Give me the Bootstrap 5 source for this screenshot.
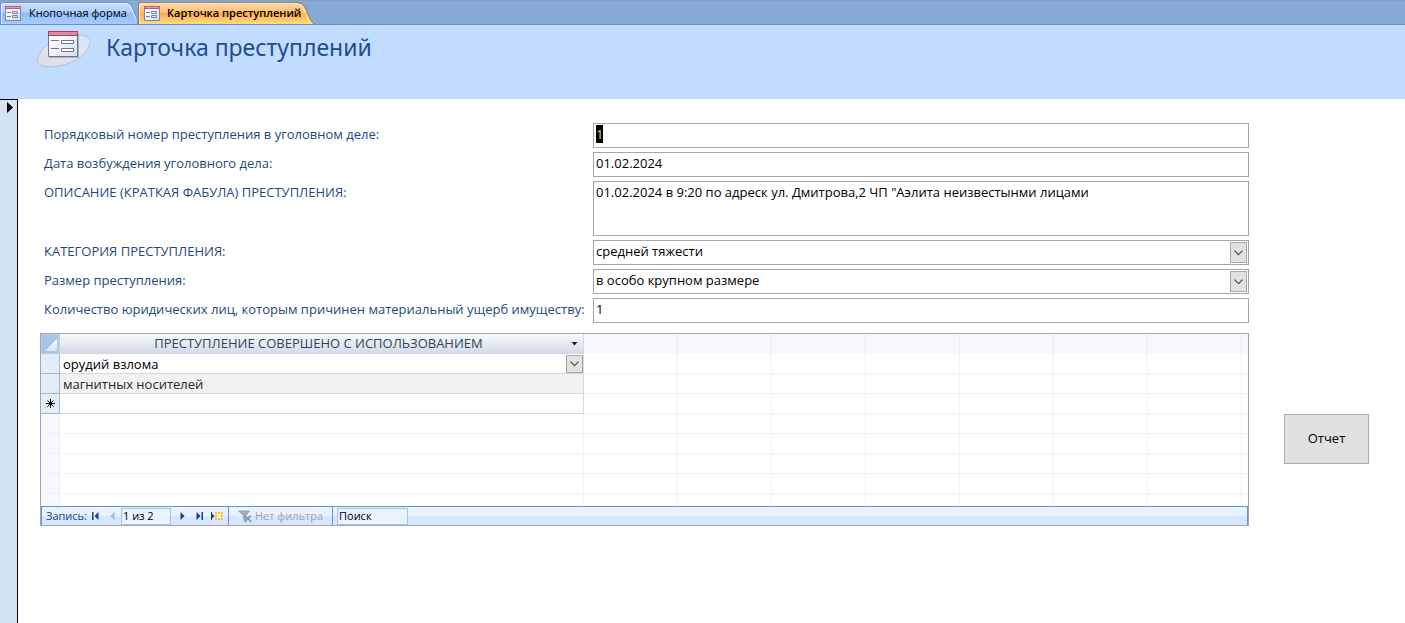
<!DOCTYPE html>
<html lang="ru">
<head>
<meta charset="utf-8">
<meta name="viewport" content="width=device-width, initial-scale=1">
<title>Карточка преступлений</title>
<link href="https://cdn.jsdelivr.net/npm/bootstrap@5.3.0/dist/css/bootstrap.min.css" rel="stylesheet">
<style>
:root { --ink: #1f497d; --edge: #a5a5ab; }
body { font-family: "Open Sans", "Noto Sans", sans-serif; font-size: 13px; line-height: 18px; color: #000; background: #fff; }

/* document tabs */
.doc-tabs { background: #87a9d6; border-top: 1px solid #8b9dba; border-bottom: 1px solid #6593cf; height: 25px; padding-top: 1px; }
.doc-tab { position: relative; border: 0; background: none; height: 22px; padding: 0 0 0 5px; gap: 8px; font-size: 11px; line-height: 20px; color: #000; text-align: left; }
.doc-tab svg { flex: none; }
.doc-tab span { position: relative; }
.doc-tab .tab-icon { position: relative; }
.doc-tab .tab-shape { position: absolute; inset: 0; width: 100%; height: 100%; }
.doc-tab-first { width: 138px; }
.doc-tab-current { width: 177px; height: 22px; font-weight: 600; padding-left: 6px; gap: 7px; }

/* form header */
.form-head { background: #c2dcff; height: 74px; padding: 3px 0 0 36px; }
.form-head h1 { font-family: "Noto Sans", sans-serif; font-size: 23px; line-height: 38px; font-weight: 400; color: #1f4e8f; margin: 0 0 0 16px; }

/* record */
.rec-selector { width: 18px; background: #d5e4f2; border: solid #000; border-width: 1px 1px 0 0; padding: 2px 0 0 6px; }
.form-area { padding: 24px 36px 24px 22px; gap: 35px; }
.fields { display: grid; grid-template-columns: 549px minmax(120px, 1fr); row-gap: 4px; padding-left: 4px; }
.fields label { color: var(--ink); line-height: 22px; }
.fields .form-control, .fields .form-select { border: 1px solid var(--edge); border-radius: 0; padding: 0 3px 3px 2px; min-height: 25px; height: 25px; font-size: 13px; line-height: 20px; color: #000; background-color: #fff; box-shadow: none; }
.fields textarea.form-control { height: 55px; min-height: 55px; resize: none; }
.fields input::selection { background: #000; color: #f5d0a0; }
.combo { position: relative; }
.combo .form-select, .grid-table .form-select { background-image: none; }
.drop-mark { position: absolute; right: 2px; top: 2px; bottom: 2px; width: 17px; background: #e1e1e1; border: 1px solid #a9a9a9; pointer-events: none; display: flex; align-items: center; justify-content: center; }

/* datasheet */
.sheet { border: 1px solid var(--edge); margin-top: 10px; }
.sheet-body { height: 172px; overflow: hidden; }
.grid-table { table-layout: fixed; width: 100%; margin: 0; border-collapse: separate; border-spacing: 0; line-height: 19px; }
.grid-table th, .grid-table td { height: 20px; padding: 0; border: solid #f1f1f6; border-width: 0 1px 1px 0; font-weight: 400; white-space: nowrap; }
.grid-table thead th { background: #f6f7ff; border-color: #e8eaf4; border-bottom-color: #f6f7ff; }
.grid-table tr > :last-child { border-right: 0; }
.grid-table tr > :first-child { background: #f6f7ff; border-color: #f1f1f6; text-align: center; }
.grid-table .live > :first-child { background: #e4ecf7; border-color: #9eb6ce; }
.grid-table .live > :nth-child(2) { border-color: #d0d7e5; padding-left: 3px; }
.grid-table .alt > :nth-child(2) { background: #f2f2f2; color: #262626; padding-top: 1px; line-height: 18px; }
.grid-table thead th:first-child { background: #a9c4e9; border: 1px solid #b4cdf1; border-right-width: 2px; text-align: right; line-height: 0; vertical-align: bottom; padding: 0 1px 2px 0; }
.grid-table thead th.col-name { background: linear-gradient(#f8fafc, #d3dbe9); border-color: #d0d7e5; color: #2c4858; text-align: center; padding: 0 5px 0 6px; }
.grid-table .form-select { border: 0; border-radius: 0; padding: 2px 0 0; font-size: 13px; line-height: 17px; height: 19px; color: #000; }
.grid-table .drop-mark { top: 1px; bottom: 0; right: 0; }
.new-input { border: 0; width: 100%; height: 18px; display: block; outline: 0; }

/* record navigator */
.navigator { border: 1px solid #6593cf; border-bottom: 0; height: 19px; background: linear-gradient(#e9f2ff 50%, #d6e7ff 50%); font-size: 11px; line-height: 18px; color: #15428b; }
.navigator button { border: 0; background: none; padding: 0; height: 18px; width: 17px; display: flex; align-items: center; justify-content: center; }
.navigator input { border: 1px solid #abc3e3; background: #e9f2ff; font-size: 11px; line-height: 13px; height: 17px; padding: 0 0 2px 1px; color: #000; }
.navigator input::placeholder { color: #000; opacity: 1; }
.navigator .rec-box { width: 50px; margin-right: 3px; }
.navigator .seek-box { width: 71px; margin: 0 4px; }
.navigator .no-filter { width: 105px; gap: 3px; border: solid #6593cf; border-width: 0 1px; color: #a3a3a3; margin-left: 3px; }

.report-btn { width: 85px; height: 50px; margin-top: 291px; border: 1px solid #adadad; border-radius: 0; background: #e1e1e1; font-size: 13px; color: #000; flex: none; padding: 0; }
</style>
</head>
<body class="d-flex flex-column min-vh-100">

<svg width="0" height="0" class="position-absolute" aria-hidden="true">
  <defs>
    <linearGradient id="blueTab" x1="0" y1="0" x2="0" y2="1"><stop offset="0" stop-color="#c6deff"/><stop offset=".45" stop-color="#afd0fd"/><stop offset=".5" stop-color="#91bbfa"/><stop offset="1" stop-color="#a8cbff"/></linearGradient>
    <linearGradient id="goldTab" x1="0" y1="0" x2="0" y2="1"><stop offset="0" stop-color="#ffd9a6"/><stop offset=".45" stop-color="#ffc078"/><stop offset=".5" stop-color="#ffad45"/><stop offset="1" stop-color="#ffda7d"/></linearGradient>
    <linearGradient id="paper" x1="0" y1="0" x2="1" y2="1"><stop offset=".2" stop-color="#fff"/><stop offset="1" stop-color="#d5deef"/></linearGradient>
    <linearGradient id="disc" x1="0" y1="1" x2="1" y2="0"><stop offset="0" stop-color="#dcdcdf"/><stop offset=".5" stop-color="#dfe7f3"/><stop offset="1" stop-color="#d3e5fb"/></linearGradient>
    <linearGradient id="corner" x1="0" y1="0" x2="0" y2="1"><stop offset="0" stop-color="#fff"/><stop offset="1" stop-color="#dbe3ef"/></linearGradient>
    <symbol id="formIcon" viewBox="0 0 16 15">
      <path fill="url(#paper)" stroke="#7487b5" d="M.5.5h15v14H.5z"/><path fill="#b9607f" d="M0 0h16v3H0z"/><path fill="#dc9bb1" d="M1 1h14v1H1z"/>
      <path stroke="#6b7c9c" d="M2 6.500h4M2 10.500h4"/><path fill="#dfe7f5" stroke="#7385a8" d="M7.500 5.500h5v2h-5zM7.500 9.500h5v2h-5z"/>
    </symbol>
    <symbol id="chevron" viewBox="0 0 9 6"><path fill="none" stroke="#505050" stroke-width="1.200" d="M.5.7 4.500 4.700 8.500.7"/></symbol>
  </defs>
</svg>

<nav class="doc-tabs d-flex align-items-start" aria-label="Открытые формы">
  <button type="button" class="doc-tab doc-tab-first d-flex align-items-center">
    <svg class="tab-shape" viewBox="0 0 138 22" preserveAspectRatio="none"><path fill="url(#blueTab)" stroke="#6b93cc" d="M.5 22V3Q.5.5 3 .5h121c7 0 8 3 10 9l3.500 8V22"/><path fill="none" stroke="#e3efff" d="M1.500 22V3.500Q1.500 1.500 4 1.500h119c7 0 7 3 10 9l3 7"/></svg>
    <svg class="tab-icon" width="16" height="15"><use href="#formIcon"/></svg><span>Кнопочная форма</span>
  </button>
  <button type="button" class="doc-tab doc-tab-current d-flex align-items-center" aria-current="page">
    <svg class="tab-shape" viewBox="0 0 177 23" preserveAspectRatio="none"><path fill="url(#goldTab)" stroke="#8b7a5c" d="M.5 23V3.500Q.5.500 3.500.5H157c9 0 10 5 13 12 2.500 6 4 10 7 10.500"/><path fill="none" stroke="#ffe6bd" d="M1.500 23V4Q1.500 1.500 4 1.500h152c8 0 9 5 12 11 2 5 3 8 5 10"/></svg>
    <svg class="tab-icon" width="16" height="15"><use href="#formIcon"/></svg><span>Карточка преступлений</span>
  </button>
</nav>

<header class="form-head d-flex align-items-start">
  <svg width="54" height="40" viewBox="0 0 54 40" aria-hidden="true">
    <path fill="url(#disc)" stroke="#b3b9c3" stroke-width=".8" d="M45 7c7 1 10 4 8.500 9C52 25 38 36 20 38.500 7 40 1 37 1.300 32 2 24 14 12 27 8.500 34 6.500 40 6.300 45 7z"/>
    <path fill="#7583a0" opacity=".5" d="M13 5h30v25H13z"/>
    <path fill="url(#paper)" stroke="#6e7585" d="M12.500 3.500h29v25h-29z"/>
    <path fill="#ad3f62" d="M12 3h30v5H12z"/><path fill="#d78ba4" d="M13 4h28v3H13z"/>
    <path stroke="#707783" d="M15 12.500h8M15 20.500h8"/><path fill="#fff" stroke="#707783" d="M25.500 12.500h12v3h-12zM25.500 20.500h12v3h-12z"/>
  </svg>
  <h1>Карточка преступлений</h1>
</header>

<main class="d-flex flex-grow-1">
  <div class="rec-selector flex-shrink-0">
    <svg class="d-block" width="8" height="11" aria-hidden="true"><path d="M1 0l6 5.500L1 11z"/></svg>
  </div>
  <form class="form-area d-flex align-items-start flex-grow-1">
    <div class="flex-grow-1">
      <div class="fields">
        <label for="num">Порядковый номер преступления в уголовном деле:</label>
        <input id="num" class="form-control" type="text" value="1">
        <label for="date">Дата возбуждения уголовного дела:</label>
        <input id="date" class="form-control" type="text" value="01.02.2024">
        <label for="story">ОПИСАНИЕ (КРАТКАЯ ФАБУЛА) ПРЕСТУПЛЕНИЯ:</label>
        <textarea id="story" class="form-control">01.02.2024 в 9:20 по адреск ул. Дмитрова,2 ЧП "Аэлита неизвестынми лицами</textarea>
        <label for="cat">КАТЕГОРИЯ ПРЕСТУПЛЕНИЯ:</label>
        <div class="combo"><select id="cat" class="form-select"><option>средней тяжести</option></select><span class="drop-mark"><svg width="9" height="6"><use href="#chevron"/></svg></span></div>
        <label for="size">Размер преступления:</label>
        <div class="combo"><select id="size" class="form-select"><option>в особо крупном размере</option></select><span class="drop-mark"><svg width="9" height="6"><use href="#chevron"/></svg></span></div>
        <label for="count">Количество юридических лиц, которым причинен материальный ущерб имуществу:</label>
        <input id="count" class="form-control" type="text" value="1">
      </div>

      <div class="sheet">
        <div class="sheet-body">
          <table class="grid-table">
            <colgroup><col width="19"><col width="524"><col width="94"><col width="94"><col width="94"><col width="94"><col width="94"><col width="94"><col width="94"><col></colgroup>
            <thead>
              <tr><th><svg width="12" height="12"><path fill="url(#corner)" d="M12 0v12H0z"/></svg></th><th class="col-name" scope="col"><span class="d-flex align-items-center"><span class="flex-grow-1">ПРЕСТУПЛЕНИЕ СОВЕРШЕНО С ИСПОЛЬЗОВАНИЕМ</span><svg width="7" height="4" aria-hidden="true"><path fill="#222" d="M.5 0h6l-3 3.500z"/></svg></span></th><th></th><th></th><th></th><th></th><th></th><th></th><th></th><th></th></tr>
            </thead>
            <tbody>
              <tr class="live"><td></td><td><div class="combo"><select class="form-select" aria-label="Преступление совершено с использованием"><option>орудий взлома</option></select><span class="drop-mark"><svg width="9" height="6"><use href="#chevron"/></svg></span></div></td><td></td><td></td><td></td><td></td><td></td><td></td><td></td><td></td></tr>
              <tr class="live alt"><td></td><td>магнитных носителей</td><td></td><td></td><td></td><td></td><td></td><td></td><td></td><td></td></tr>
              <tr class="live"><td><svg class="d-block mx-auto" width="9" height="9" aria-hidden="true"><path stroke="#000" d="M4.500 0v9M0 4.500h9M1.500 1.500l6 6M7.500 1.500l-6 6"/></svg></td><td><input class="new-input" type="text" aria-label="Новая запись"></td><td></td><td></td><td></td><td></td><td></td><td></td><td></td><td></td></tr>
              <tr><td></td><td></td><td></td><td></td><td></td><td></td><td></td><td></td><td></td><td></td></tr>
              <tr><td></td><td></td><td></td><td></td><td></td><td></td><td></td><td></td><td></td><td></td></tr>
              <tr><td></td><td></td><td></td><td></td><td></td><td></td><td></td><td></td><td></td><td></td></tr>
              <tr><td></td><td></td><td></td><td></td><td></td><td></td><td></td><td></td><td></td><td></td></tr>
              <tr><td></td><td></td><td></td><td></td><td></td><td></td><td></td><td></td><td></td><td></td></tr>
            </tbody>
          </table>
        </div>
        <div class="navigator d-flex align-items-center">
          <label for="rec" class="ps-1">Запись:</label>
          <button type="button" aria-label="Первая запись"><svg width="7" height="8"><path fill="#15428b" d="M0 0h1.500v8H0zM6.500 0v8L2.500 4z"/></svg></button>
          <button type="button" aria-label="Предыдущая запись"><svg width="5" height="8"><path fill="#a3bbe0" d="M4.500 0v8L.5 4z"/></svg></button>
          <input id="rec" class="rec-box" type="text" value="1 из 2">
          <button type="button" aria-label="Следующая запись"><svg width="5" height="8"><path fill="#15428b" d="M.5 0v8l4-4z"/></svg></button>
          <button type="button" aria-label="Последняя запись"><svg width="7" height="8"><path fill="#15428b" d="M.5 0v8l4-4zM5.500 0H7v8H5.500z"/></svg></button>
          <button type="button" aria-label="Новая запись"><svg width="12" height="8"><path fill="#15428b" d="M0 0h1v8H0zM1 1.500v5L3.500 4z"/><path fill="#f3bd35" d="M4 0h2v2H4zM7 0h2v2H7zM10 0h2v2h-2zM4 3h2v2H4zM10 3h2v2h-2zM4 6h2v2H4zM7 6h2v2H7zM10 6h2v2h-2z"/><path fill="#fff0a8" d="M6 2h4v4H6z"/></svg></button>
          <div class="no-filter d-flex align-items-center justify-content-center">
            <svg width="14" height="13" aria-hidden="true"><path fill="#a5b2c4" stroke="#8493ab" stroke-width=".8" d="M.5 1h11L8 5.500V11L5.500 9V5.500z"/><path fill="none" stroke="#8493ab" stroke-width="1.600" d="M6.500 5.500l7 6.500M13 5.500L6.500 12"/></svg><span>Нет фильтра</span>
          </div>
          <input class="seek-box" type="text" placeholder="Поиск" aria-label="Поиск">
        </div>
      </div>
    </div>
    <button type="button" class="btn report-btn">Отчет</button>
  </form>
</main>

<script src="https://cdn.jsdelivr.net/npm/bootstrap@5.3.0/dist/js/bootstrap.bundle.min.js"></script>
<script>
  const first = document.getElementById('num');
  first.focus();
  first.select();
</script>
</body>
</html>
